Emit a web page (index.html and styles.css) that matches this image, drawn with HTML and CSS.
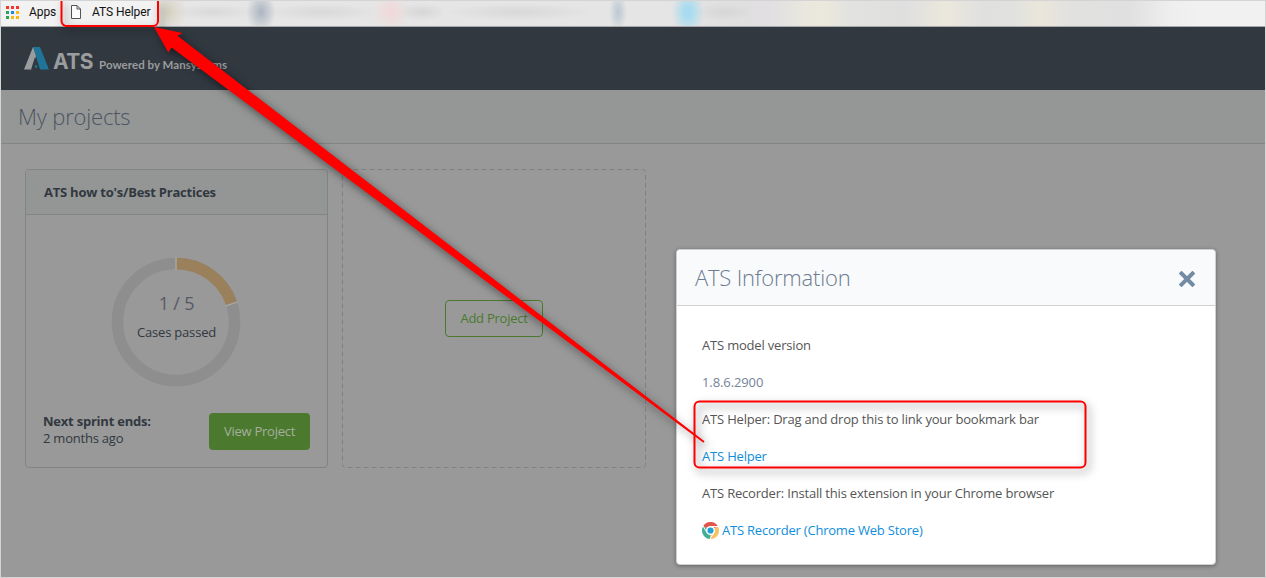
FILE: index.html
```html
<!DOCTYPE html>
<html lang="en">
<head>
<meta charset="utf-8">
<title>ATS - My projects</title>
<link rel="stylesheet" href="styles.css">
</head>
<body>
<div class="screen">
  <nav class="bookmarks">
    <svg class="apps-icon" width="13" height="13" viewBox="0 0 13 13" shape-rendering="crispEdges">
      <path fill="#f4362f" d="M0 0h3v3H0zM5 0h3v3H5zM10 0h3v3h-3z"/>
      <path fill="#27a35a" d="M0 5h3v3H0zM0 10h3v3H0z"/>
      <path fill="#1e88e5" d="M5 5h3v3H5z"/>
      <path fill="#fbb80f" d="M10 5h3v3h-3zM5 10h3v3H5zM10 10h3v3h-3z"/>
    </svg>
    <span class="apps">Apps</span>
    <svg class="page-icon" width="10" height="14" viewBox="0 0 10 14"><path d="M.5.5h5.500l3.500 3.500v9.500h-9zM6 .5v3.500h3.500" fill="#fff" stroke="#555"/></svg>
    <span class="helper">ATS Helper</span>
    <div class="blurred"></div>
  </nav>
  <header class="topbar">
    <svg class="logo" width="25" height="23" viewBox="0 0 25 23"><path d="M9 0h6L8 22.500H0z" fill="#9b9c9d"/><path d="M9 0h7l9 22.500h-9z" fill="#1f7497"/><path d="M11 10l4.500 12.500H7z" fill="#313840"/><circle cx="12" cy="19.500" r="1.300" fill="#1f7497"/></svg>
    <span class="brand">ATS</span>
    <span class="powered">Powered by Mansystems</span>
  </header>
  <div class="pagehead"><h1>My projects</h1></div>
  <main class="projects">
    <section class="card">
      <h2>ATS how to's/Best Practices</h2>
      <div class="chart">
        <svg width="130" height="130" viewBox="-65 -65 130 130">
          <circle r="58.500" fill="none" stroke="#8e8e8e" stroke-width="11.500"/>
          <path d="M0-58.500A58.500 58.500 0 0 1 55.640-18.080" fill="none" stroke="#9a815c" stroke-width="11.500"/>
          <path d="M0-52V-65M49.500-16.070L61.800-20.090" stroke="#a5a5a5" stroke-width="1.500"/>
        </svg>
        <div class="score"><span class="count">1 / 5</span><span class="passed">Cases passed</span></div>
      </div>
      <div class="cardfoot">
        <p><b>Next sprint ends:</b><br>2 months ago</p>
        <button class="view">View Project</button>
      </div>
    </section>
    <section class="newcard">
      <svg class="dash" width="304" height="299"><rect x=".5" y=".5" width="303" height="298" rx="3"/></svg>
      <button class="add">Add Project</button>
    </section>
  </main>

  <section class="modal">
    <div class="modalhead">
      <h3>ATS Information</h3>
      <svg width="16" height="16" viewBox="0 0 16 16"><path d="M2.500 2.500l11 11M13.500 2.500l-11 11" stroke="#738ba3" stroke-width="4" stroke-linecap="square" stroke-linejoin="round"/></svg>
    </div>
    <div class="modalbody">
      <p>ATS model version</p>
      <p class="version">1.8.6.2900</p>
      <p>ATS Helper: Drag and drop this to link your bookmark bar</p>
      <p><a>ATS Helper</a></p>
      <p>ATS Recorder: Install this extension in your Chrome browser</p>
      <p class="store">
        <svg width="17" height="17" viewBox="-8.500 -8.500 17 17">
          <path d="M0 0L-7.400-4.200A8.500 8.500 0 0 1 7.400-4.200z" fill="#e2574c"/>
          <path d="M0 0L7.400-4.200A8.500 8.500 0 0 1-.5 8.500z" fill="#f4c464"/>
          <path d="M0 0L-.5 8.500A8.500 8.500 0 0 1-7.400-4.200z" fill="#3fb096"/>
          <path d="M0-4H8M-3.500 2l-4-6.500M3.500 2L-.5 8.500" stroke="#fff"/>
          <circle r="4.500" fill="#fff"/><circle r="3.100" fill="#1fa0d8"/>
        </svg>
        <a>ATS Recorder (Chrome Web Store)</a>
      </p>
    </div>
  </section>

  <svg class="marks" width="1266" height="578" viewBox="0 0 1266 578">
    <g class="outline">
      <path d="M61.500-6V21a5 5 0 0 0 5 5H153a5 5 0 0 0 5-5V-6"/>
      <rect x="694.500" y="401.500" width="391" height="66" rx="5"/>
    </g>
    <path class="arrow" d="M154 27L182.500 33L177.500 35.800L704.500 441.300L703.500 442.700L171.500 47.500L168.300 52.500z"/>
  </svg>
</div>
</body>
</html>
```
FILE: styles.css
```css
* { box-sizing: border-box; }
body { margin: 0; font-family: "Open Sans", sans-serif; font-size: 13px; letter-spacing: -.19px; }
h1, h2, h3, p { margin: 0; }
button { font: inherit; letter-spacing: -.25px; border-radius: 4px; height: 37px; padding: 0 0 2px; }
.screen { position: relative; width: 1266px; height: 578px; overflow: hidden; background: #999; border: 1px solid #d4d4d4; }
.bookmarks { display: flex; align-items: center; height: 26px; padding: 0 0 3px 5px; background: #f2f2f2; border-bottom: 1px solid #a9a9a9; font-family: Roboto, sans-serif; font-size: 12px; letter-spacing: -.08px; color: #111; }
.apps { width: 27px; margin-left: 10px; }
.page-icon { margin-left: 15px; }
.helper { width: 60px; margin-left: 11px; white-space: nowrap; }
.blurred { align-self: stretch; flex: 1; margin: 0 0 -3px 7px; background:
  radial-gradient(ellipse 16px 24px at 529px 11px, #a8dcf0 20%, rgba(168,220,240,0)),
  radial-gradient(ellipse 15px 20px at 102px 11px, #b0b9c4 10%, rgba(176,185,196,0)),
  radial-gradient(ellipse 18px 20px at 232px 11px, #f0d9d9 10%, rgba(240,217,217,0)),
  radial-gradient(ellipse 9px 20px at 459px 11px, #bdc9d3 5%, rgba(189,201,211,0)),
  radial-gradient(ellipse 18px 22px at 10px 11px, #d8d4c4 5%, rgba(216,212,196,0)),
  radial-gradient(ellipse 45px 8px at 54px 11px, #d9d9d9, rgba(217,217,217,0)),
  radial-gradient(ellipse 60px 9px at 162px 11px, #d9d9d9, rgba(217,217,217,0)),
  radial-gradient(ellipse 25px 9px at 262px 11px, #d6d6d6, rgba(214,214,214,0)),
  radial-gradient(ellipse 75px 9px at 360px 11px, #d8d8d8, rgba(216,216,216,0)),
  radial-gradient(ellipse 30px 9px at 565px 11px, #d6d6d6, rgba(214,214,214,0)),
  linear-gradient(90deg, #e6e6e6 0, #e5e5e5 500px, #e0e0e0 565px, #e1dfe1 610px, #e9e7df 645px, #ebe8db 665px, #e2e2e0 690px, #dfdfdf 745px, #ebe7dc 788px, #e0e0df 825px, #e1e1e0 855px, #eae6da 880px, #e1e1e0 912px, #e0e0e0 970px, #eee 1010px, #f1f1f1 1040px); }
.topbar { display: flex; height: 63px; padding-left: 23px; background: #313840; color: #9b9c9d; font-weight: 700; }
.logo { margin-top: 20px; }
.brand { font-family: Inter, sans-serif; font-size: 21px; line-height: 27px; margin: 21px 0 0 4px; width: 42px; letter-spacing: -.6px; }
.powered { font-family: Lato, sans-serif; font-size: 11.500px; letter-spacing: .04px; line-height: 16px; margin: 30px 0 0 4px; white-space: nowrap; }
.pagehead { height: 54px; padding: 10px 17px; background: #959796; border-bottom: 1px solid #838485; }
.pagehead h1 { font-size: 22px; line-height: 32px; font-weight: 300; color: #4c5561; }
.projects { display: flex; gap: 14px; padding: 25px 24px; }
.card { width: 303px; height: 299px; border: 1px solid #828383; border-radius: 4px; color: #313840; }
.card h2 { height: 45px; padding: 0 18px; border-bottom: 1px solid #828383; background: #949695; border-radius: 3px 3px 0 0; font-size: 13px; line-height: 44px; letter-spacing: -.23px; }
.chart { position: relative; display: flex; justify-content: center; margin-top: 42px; }
.chart > svg { display: block; margin-right: 1px; }
.score { position: absolute; inset: 34px 0 auto; display: flex; flex-direction: column; align-items: center; }
.count { font-size: 18px; line-height: 24px; color: #555b66; }
.passed { line-height: 18px; margin-top: 8px; }
.cardfoot { display: flex; justify-content: space-between; padding: 26px 17px 0; }
.cardfoot p { line-height: 17px; letter-spacing: -.22px; }
.view { width: 101px; border: 0; background: #4b7a2e; color: #a6aea0; }
.newcard { position: relative; display: flex; width: 304px; height: 299px; align-items: center; justify-content: center; }
.dash { position: absolute; inset: 0; fill: none; stroke: #808080; stroke-dasharray: 5 3; }
.add { width: 98px; border: 1px solid #4b7a2e; background: none; color: #4b7a2e; }
.modal { position: absolute; left: 675px; top: 248px; width: 540px; height: 316px; background: #fff; border: 1px solid #cfd0d1; border-radius: 4px; box-shadow: 0 1px 4px rgba(0,0,0,.35); overflow: hidden; }
.modalhead { display: flex; justify-content: space-between; align-items: center; height: 56px; padding: 3px 20px 1px 18px; background: #f9fafc; border-bottom: 1px solid #cfd0d1; }
.modalhead h3 { font-size: 22px; font-weight: 300; line-height: 32px; color: #6c7b90; margin-top: -4px; }
.modalbody { padding: 29px 25px; color: #555; }
.modalbody p { height: 20px; line-height: 20px; margin-bottom: 17px; white-space: nowrap; }
.modalbody .version { color: #74839a; letter-spacing: -.1px; }
.modalbody a { color: #0f8edb; }
.store { display: flex; align-items: center; gap: 3px; letter-spacing: -.21px; }
.marks { position: absolute; left: -1px; top: -1px; pointer-events: none; filter: drop-shadow(3px 4px 4px rgba(0,0,0,.5)); }
.outline { fill: none; stroke: #f00; stroke-width: 2; }
.arrow { fill: #f00; }
```
